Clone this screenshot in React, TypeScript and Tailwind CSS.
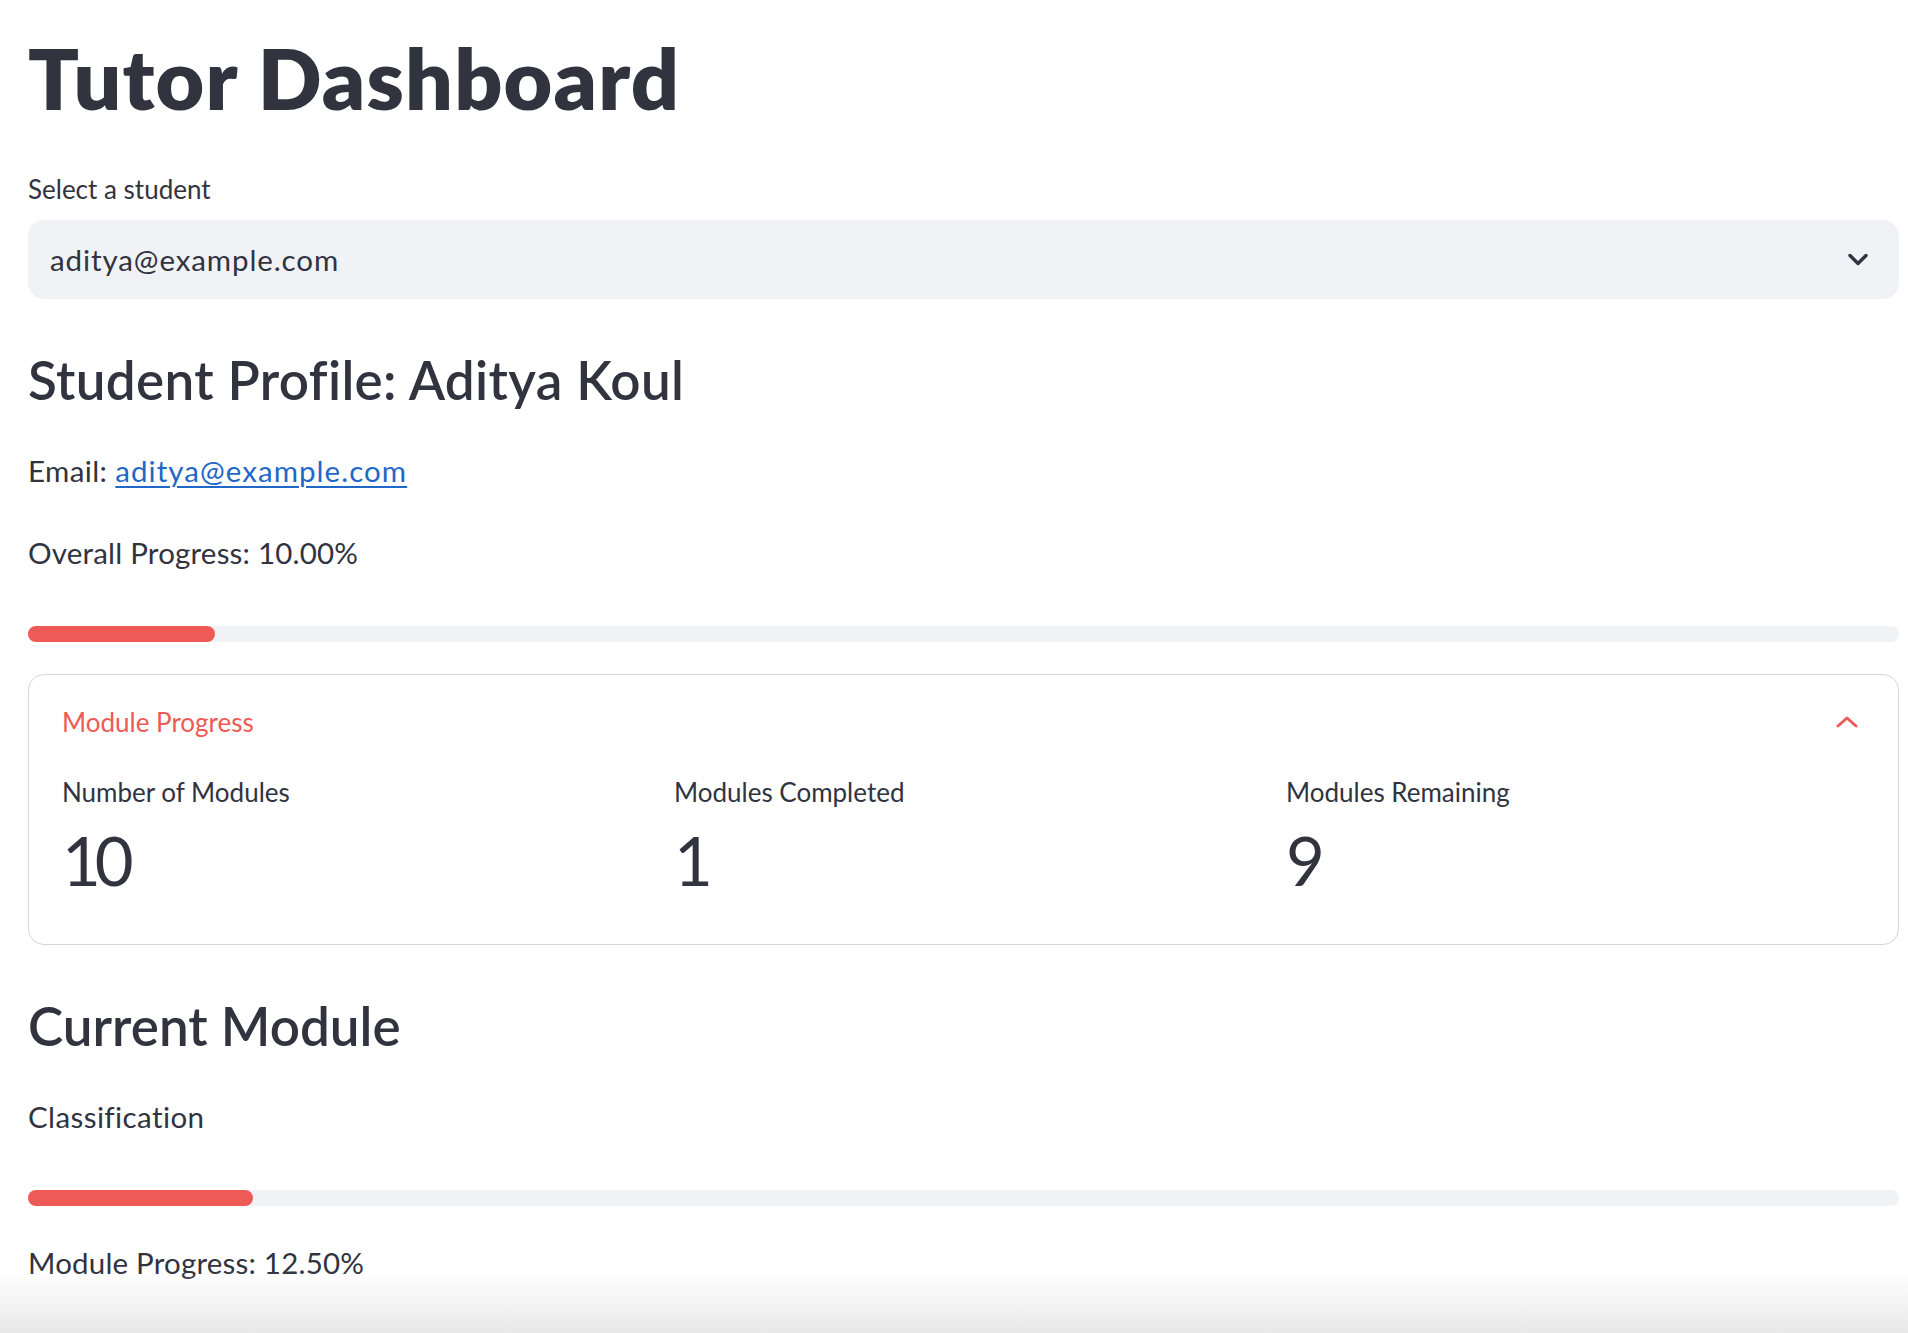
import React from "react";

const font = "font-['Lato','Noto_Sans',sans-serif]";

function ProgressBar({ value }: { value: number }) {
  return (
    <div className="h-[16px] w-full rounded-full bg-[#f0f2f6]">
      <div className="h-full rounded-full bg-[#ee5a55]" style={{ width: `${value}%` }} />
    </div>
  );
}

function Metric({ label, value }: { label: string; value: string }) {
  return (
    <div>
      <div className="h-[26px] text-[26px] leading-none">{label}</div>
      <div className="mt-[22px] h-[67px] text-[67px] leading-none tracking-[-6px]">{value}</div>
    </div>
  );
}

export default function App() {
  return (
    <div className={`relative h-[1333px] overflow-hidden bg-white text-[#31333f] ${font}`}>
      <main className="pl-[28px] pr-[9px] pt-[36px]">
        <h1 className="h-[84px] text-[84px] font-extrabold leading-none tracking-[1.2px]">Tutor Dashboard</h1>

        <label className="mt-[56px] block h-[26px] text-[26px] leading-none">Select a student</label>
        <div className="mt-[18px] flex h-[79px] items-center justify-between rounded-[16px] bg-[#f0f2f6] pl-[22px] pr-[31px]">
          <span className="text-[29.5px] leading-none tracking-[0.9px]">aditya@example.com</span>
          <svg width="20" height="13" viewBox="0 0 20 13" fill="none">
            <polyline points="2,2.5 10,10.5 18,2.5" stroke="#31333f" strokeWidth="3.4" strokeLinecap="round" strokeLinejoin="round" />
          </svg>
        </div>

        <h3 className="mt-[54px] h-[53px] text-[53px] font-semibold leading-none tracking-[0.35px]">
          Student Profile: Aditya Koul
        </h3>

        <p className="mt-[50px] h-[30px] text-[29.5px] leading-[30px] tracking-[0.4px]">
          Email:{" "}
          <a href="#" className="tracking-[1.05px] text-[#1f68c8] underline decoration-[2px] underline-offset-[4px]">
            aditya@example.com
          </a>
        </p>

        <p className="mt-[52px] h-[30px] text-[29.5px] leading-[30px] tracking-[0.2px]">Overall Progress: 10.00%</p>

        <div className="mt-[58px]">
          <ProgressBar value={10} />
        </div>

        <section className="mt-[32px] rounded-[16px] border border-[#d6d6d9] pb-[50px] pl-[33px] pr-[33px] pt-[34px]">
          <div className="flex h-[26px] items-center justify-between">
            <span className="text-[26px] leading-none text-[#ee5a55]">Module Progress</span>
            <svg className="mr-[7px]" width="22" height="12" viewBox="0 0 22 12" fill="none">
              <polyline points="2,10 11,2 20,10" stroke="#ee5a55" strokeWidth="3" strokeLinecap="round" strokeLinejoin="round" />
            </svg>
          </div>
          <div className="mt-[44px] grid grid-cols-3 gap-[33px]">
            <Metric label="Number of Modules" value="10" />
            <Metric label="Modules Completed" value="1" />
            <Metric label="Modules Remaining" value="9" />
          </div>
        </section>

        <h3 className="mt-[54px] h-[53px] text-[53px] font-semibold leading-none">Current Module</h3>

        <p className="mt-[50px] h-[30px] text-[29.5px] leading-[30px] tracking-[0.4px]">Classification</p>

        <div className="mt-[58px]">
          <ProgressBar value={12} />
        </div>

        <p className="mt-[42px] h-[30px] text-[29.5px] leading-[30px] tracking-[0.2px]">Module Progress: 12.50%</p>
      </main>

      <div className="pointer-events-none absolute inset-x-0 bottom-0 h-[62px] bg-linear-to-b from-white/0 to-[#e8e8e8]" />
    </div>
  );
}
